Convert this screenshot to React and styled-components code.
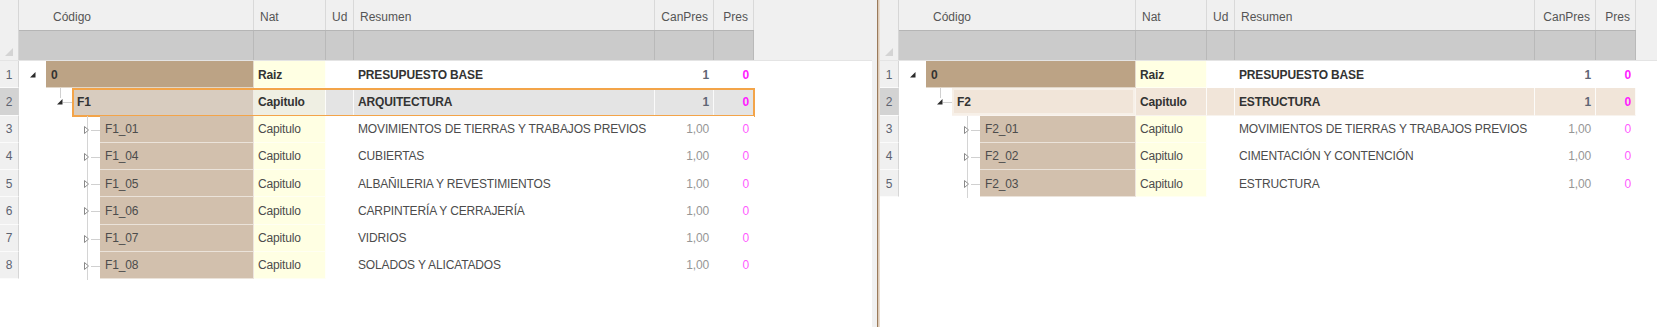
import React from 'react';
import styled, { createGlobalStyle } from 'styled-components';

const GlobalStyle = createGlobalStyle`
  html, body { margin: 0; padding: 0; background: #fff; }
  body {
    font-family: "Liberation Sans", Arial, sans-serif;
    font-size: 12px;
    color: #505050;
  }
`;

const LEFT_COLS = { num: 19, code: 235, nat: 72, ud: 28, res: 301, can: 59, pres: 40 };
const RIGHT_COLS = { num: 19, code: 237, nat: 71, ud: 28, res: 300, can: 61, pres: 40 };
const INDENTS = [27, 53, 81];

const VARIANTS = {
  root: { code: '#bca385', nat: '#ffffe3', other: '#ffffff', bold: true },
  focused: { code: '#d8ccbf', nat: '#efefe3', other: '#e4e4e4', bold: true },
  selected: { code: '#f1e5d9', nat: '#f1e5d9', other: '#f1e5d9', bold: true },
  normal: { code: '#d2c0ad', nat: '#ffffe3', other: '#ffffff', bold: false },
};

const Screen = styled.div`
  display: flex;
  width: 1657px;
  height: 327px;
  background: #fff;
  overflow: hidden;
`;

const Panel = styled.div`
  flex: ${(p) => (p.$width ? `0 0 ${p.$width}px` : '1 1 auto')};
  min-width: 0;
  display: flex;
  flex-direction: column;
  background: #fff;
`;

const Splitter = styled.div`
  flex: 0 0 8px;
  background: linear-gradient(
    to right,
    #f0f0f0 0,
    #f0f0f0 5px,
    #9a7a5a 5px,
    #9a7a5a 6.5px,
    #dccab7 6.5px,
    #efe6dc 8px
  );
`;

const HeaderBlock = styled.div`
  flex: 0 0 auto;
  display: flex;
  height: 61px;
  box-sizing: border-box;
  background: #f0f0f0;
  border-bottom: 1px solid #e4e4e4;
`;

const CornerCell = styled.div`
  flex: 0 0 ${(p) => p.$w}px;
  box-sizing: border-box;
  border-right: 1px solid #d6d6d6;
  position: relative;

  &::after {
    content: '';
    position: absolute;
    right: 5px;
    bottom: 4px;
    width: 0;
    height: 0;
    border-left: 8px solid transparent;
    border-bottom: 8px solid #d4d4d4;
  }
`;

const HeaderGrid = styled.div`
  display: flex;
  flex-direction: column;
`;

const TitleRow = styled.div`
  display: flex;
  height: 30px;
`;

const FilterRow = styled.div`
  display: flex;
  height: 30px;
  box-sizing: border-box;
  border-top: 1px solid #b5b5b5;
  background: #cbcbcb;
`;

const TitleCell = styled.div`
  flex: 0 0 ${(p) => p.$w}px;
  box-sizing: border-box;
  border-right: 1px solid #d9d9d9;
  display: flex;
  align-items: center;
  justify-content: ${(p) => (p.$right ? 'flex-end' : 'flex-start')};
  padding: 3px 5px 0 ${(p) => p.$pl ?? 6}px;
  color: #555;
  font-size: 12px;
  white-space: nowrap;
`;

const FilterCell = styled.div`
  flex: 0 0 ${(p) => p.$w}px;
  box-sizing: border-box;
  border-right: 1px solid #b9b9b9;
`;

const Body = styled.div`
  display: flex;
  flex-direction: column;
  align-items: flex-start;
`;

const Row = styled.div`
  flex: 0 0 auto;
  display: flex;
  height: 27.25px;
  position: relative;
`;

const NumCell = styled.div`
  flex: 0 0 ${(p) => p.$w}px;
  box-sizing: border-box;
  background: ${(p) => (p.$selected ? '#d3d3d3' : '#f0f0f0')};
  border-right: 1px solid #d6d6d6;
  border-bottom: 1px solid #fbfbfb;
  display: flex;
  align-items: center;
  justify-content: center;
  padding-top: 1px;
  color: #5d6370;
  font-size: 12px;
`;

const CodeCol = styled.div`
  flex: 0 0 ${(p) => p.$w}px;
  display: flex;
`;

const Gutter = styled.svg`
  flex: 0 0 auto;
  display: block;
  overflow: visible;
`;

const CodeBox = styled.div`
  flex: 1 1 auto;
  min-width: 0;
  box-sizing: border-box;
  background: ${(p) => p.$bg};
  border-right: 1px solid rgba(255, 255, 255, 0.6);
  border-bottom: 1px solid rgba(255, 255, 255, 0.55);
  box-shadow: ${(p) => (p.$soft ? 'inset 0 0 0 2px #f7f0e8' : 'none')};
  display: flex;
  align-items: center;
  padding: 1px 0 0 5px;
  font-weight: ${(p) => (p.$bold ? 700 : 400)};
  color: ${(p) => (p.$bold ? '#333' : '#4c4c4c')};
  letter-spacing: -0.15px;
  white-space: nowrap;
`;

const Cell = styled.div`
  flex: 0 0 ${(p) => p.$w}px;
  box-sizing: border-box;
  background: ${(p) => p.$bg};
  border-right: 1px solid rgba(255, 255, 255, 0.85);
  border-bottom: 1px solid rgba(255, 255, 255, 0.55);
  display: flex;
  align-items: center;
  justify-content: ${(p) => (p.$right ? 'flex-end' : 'flex-start')};
  padding: 1px 4px 0;
  font-weight: ${(p) => (p.$bold ? 700 : 400)};
  color: ${(p) => p.$color || (p.$bold ? '#333' : '#4c4c4c')};
  letter-spacing: -0.15px;
  white-space: nowrap;
  overflow: hidden;
`;

const FocusFrame = styled.div`
  position: absolute;
  top: 0;
  bottom: -1px;
  left: ${(p) => p.$left}px;
  right: -1px;
  border: 2px solid #f3a449;
  box-sizing: border-box;
  pointer-events: none;
`;

function TreeGutter({ level }) {
  const w = INDENTS[level];
  if (level === 0) {
    return (
      <Gutter width={w} height={27}>
        <polygon points="16.5,11 16.5,16.5 11,16.5" fill="#2b2b2b" />
      </Gutter>
    );
  }
  if (level === 1) {
    return (
      <Gutter width={w} height={27}>
        <line x1="41.5" y1="0" x2="41.5" y2="10" stroke="#d0d0d0" strokeWidth="1" />
        <line x1="44" y1="14.5" x2="53" y2="14.5" stroke="#d0d0d0" strokeWidth="1" />
        <polygon points="43.5,11 43.5,16.5 38,16.5" fill="#2b2b2b" />
      </Gutter>
    );
  }
  return (
    <Gutter width={w} height={27}>
      <line x1="68.5" y1="0" x2="68.5" y2="28" stroke="#d4d4d4" strokeWidth="1" />
      <line x1="72" y1="14.5" x2="81" y2="14.5" stroke="#d0d0d0" strokeWidth="1" />
      <polygon points="65.5,10.5 65.5,17.5 69.5,14" fill="#fff" stroke="#8a8a8a" strokeWidth="1" />
    </Gutter>
  );
}

function Header({ cols }) {
  const tableCols = [
    { key: 'code', label: 'Código', pl: 34 },
    { key: 'nat', label: 'Nat' },
    { key: 'ud', label: 'Ud' },
    { key: 'res', label: 'Resumen' },
    { key: 'can', label: 'CanPres', right: true },
    { key: 'pres', label: 'Pres', right: true },
  ];
  return (
    <HeaderBlock>
      <CornerCell $w={cols.num} />
      <HeaderGrid>
        <TitleRow>
          {tableCols.map((c) => (
            <TitleCell key={c.key} $w={cols[c.key]} $pl={c.pl} $right={c.right}>
              {c.label}
            </TitleCell>
          ))}
        </TitleRow>
        <FilterRow>
          {tableCols.map((c) => (
            <FilterCell key={c.key} $w={cols[c.key]} />
          ))}
        </FilterRow>
      </HeaderGrid>
    </HeaderBlock>
  );
}

function DataRow({ cols, row, index }) {
  const v = VARIANTS[row.variant];
  const indent = INDENTS[row.level];
  return (
    <Row>
      <NumCell $w={cols.num} $selected={row.variant === 'focused' || row.variant === 'selected'}>
        {index + 1}
      </NumCell>
      <CodeCol $w={cols.code}>
        <TreeGutter level={row.level} />
        <CodeBox $bg={v.code} $bold={v.bold} $soft={row.variant === 'selected'}>
          {row.code}
        </CodeBox>
      </CodeCol>
      <Cell $w={cols.nat} $bg={v.nat} $bold={v.bold}>
        {row.nat}
      </Cell>
      <Cell $w={cols.ud} $bg={v.other} />
      <Cell $w={cols.res} $bg={v.other} $bold={v.bold}>
        {row.res}
      </Cell>
      <Cell
        $w={cols.can}
        $bg={v.other}
        $bold={v.bold}
        $right
        $color={v.bold ? '#5f6675' : '#969696'}
      >
        {v.bold ? '1' : '1,00'}
      </Cell>
      <Cell $w={cols.pres} $bg={v.other} $bold={v.bold} $right $color={v.bold ? '#ff1cff' : '#ff5cff'}>
        0
      </Cell>
      {row.variant === 'focused' && <FocusFrame $left={cols.num + indent} />}
    </Row>
  );
}

function Grid({ cols, rows, width }) {
  return (
    <Panel $width={width}>
      <Header cols={cols} />
      <Body>
        {rows.map((r, i) => (
          <DataRow key={r.code} cols={cols} row={r} index={i} />
        ))}
      </Body>
    </Panel>
  );
}

const leftRows = [
  { level: 0, code: '0', nat: 'Raiz', res: 'PRESUPUESTO BASE', variant: 'root' },
  { level: 1, code: 'F1', nat: 'Capitulo', res: 'ARQUITECTURA', variant: 'focused' },
  { level: 2, code: 'F1_01', nat: 'Capitulo', res: 'MOVIMIENTOS DE TIERRAS Y TRABAJOS PREVIOS', variant: 'normal' },
  { level: 2, code: 'F1_04', nat: 'Capitulo', res: 'CUBIERTAS', variant: 'normal' },
  { level: 2, code: 'F1_05', nat: 'Capitulo', res: 'ALBAÑILERIA Y REVESTIMIENTOS', variant: 'normal' },
  { level: 2, code: 'F1_06', nat: 'Capitulo', res: 'CARPINTERÍA Y CERRAJERÍA', variant: 'normal' },
  { level: 2, code: 'F1_07', nat: 'Capitulo', res: 'VIDRIOS', variant: 'normal' },
  { level: 2, code: 'F1_08', nat: 'Capitulo', res: 'SOLADOS Y ALICATADOS', variant: 'normal' },
];

const rightRows = [
  { level: 0, code: '0', nat: 'Raiz', res: 'PRESUPUESTO BASE', variant: 'root' },
  { level: 1, code: 'F2', nat: 'Capitulo', res: 'ESTRUCTURA', variant: 'selected' },
  { level: 2, code: 'F2_01', nat: 'Capitulo', res: 'MOVIMIENTOS DE TIERRAS Y TRABAJOS PREVIOS', variant: 'normal' },
  { level: 2, code: 'F2_02', nat: 'Capitulo', res: 'CIMENTACIÓN Y CONTENCIÓN', variant: 'normal' },
  { level: 2, code: 'F2_03', nat: 'Capitulo', res: 'ESTRUCTURA', variant: 'normal' },
];

export default function App() {
  return (
    <>
      <GlobalStyle />
      <Screen>
        <Grid cols={LEFT_COLS} rows={leftRows} width={872} />
        <Splitter />
        <Grid cols={RIGHT_COLS} rows={rightRows} />
      </Screen>
    </>
  );
}
